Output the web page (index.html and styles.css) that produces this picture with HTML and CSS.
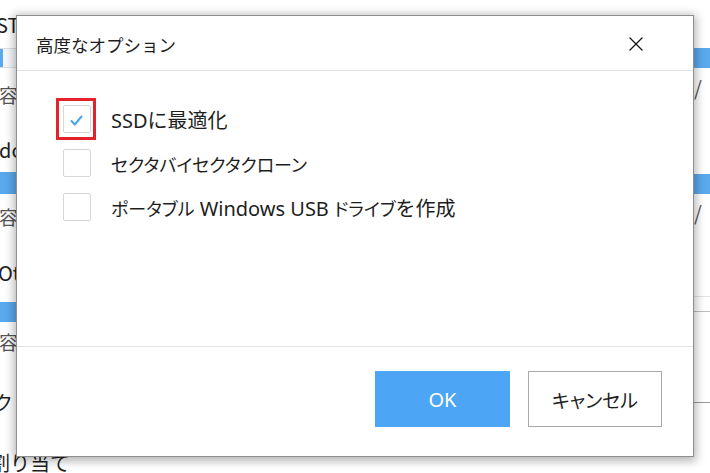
FILE: index.html
```html
<!DOCTYPE html>
<html lang="ja">
<head>
<meta charset="utf-8">
<link rel="stylesheet" href="styles.css">
</head>
<body>
<div class="page">
  <div class="main">
    <div class="side side-left">
      <div class="bg-name n1">ST1000DM</div>
      <div class="bg-bar bar-partial"></div>
      <div class="bg-cap c1">容量</div>
      <div class="bg-name n2">dows</div>
      <div class="bg-bar b2"></div>
      <div class="bg-cap c2">容量</div>
      <div class="bg-name n3">Other</div>
      <div class="bg-bar b3"></div>
      <div class="bg-cap c3">容量</div>
      <div class="bg-name n4">ク</div>
    </div>
    <div class="center"></div>
    <div class="side side-right">
      <div class="rbar r1"></div>
      <div class="slash s1">/</div>
      <div class="rbar r2"></div>
      <div class="slash s2">/</div>
      <div class="rline l1"></div>
      <div class="rline l2"></div>
      <div class="rline l3"></div>
    </div>
  </div>
  <div class="bottom-row">割り当て</div>

  <div class="dialog">
    <div class="dlg-head">
      <div class="dlg-title">高度なオプション</div>
      <button class="close" aria-label="close">
        <svg width="14" height="14" viewBox="0 0 14 14"><path d="M0.5 0.5 L13.5 13.5 M13.5 0.5 L0.5 13.5" stroke="#111" stroke-width="1.2" fill="none"/></svg>
      </button>
    </div>
    <div class="dlg-body">
      <div class="opt">
        <span class="box checked">
          <svg width="15" height="15" viewBox="0 0 15 15"><path d="M2.5 8 L5.8 11.5 L12.5 3.5" stroke="#4aa3f0" stroke-width="2" fill="none" stroke-linecap="round" stroke-linejoin="round"/></svg>
          <span class="mark"></span>
        </span>
        <span class="label"><span class="lat">SSD</span>に最適化</span>
      </div>
      <div class="opt">
        <span class="box"></span>
        <span class="label"><span class="kana">セクタバイセクタクローン</span></span>
      </div>
      <div class="opt">
        <span class="box"></span>
        <span class="label"><span class="kana">ポータブル</span><span class="lat"> Windows USB </span><span class="kana">ドライブ</span>を作成</span>
      </div>
    </div>
    <div class="dlg-foot">
      <button class="btn btn-ok">OK</button>
      <button class="btn btn-cancel">キャンセル</button>
    </div>
  </div>
</div>
</body>
</html>
```

FILE: styles.css
```css
* { box-sizing: border-box; }
html, body {
  margin: 0;
  padding: 0;
  width: 710px;
  height: 473px;
  overflow: hidden;
  background: #fff;
  font-family: "Noto Sans CJK JP", "Noto Sans", sans-serif;
  color: #1e1e1e;
}
.page {
  position: relative;
  width: 710px;
  height: 473px;
  display: flex;
  flex-direction: column;
  overflow: hidden;
}
.main {
  height: 453px;
  display: flex;
  flex-shrink: 0;
}
.side {
  width: 17px;
  overflow: hidden;
  display: flex;
  flex-direction: column;
  flex-shrink: 0;
}
.center { flex: 1; }

/* left background column */
.bg-name, .bg-cap {
  font-size: 20px;
  line-height: 20px;
  height: 20px;
  white-space: nowrap;
}
.bg-cap { color: #555; font-size: 19px; }
.n1 { margin-top: 15px; margin-left: -4px; }
.bg-bar { height: 20px; background: #5aa9ec; }
.bar-partial {
  margin-top: 13px;
  background: linear-gradient(to right, #5aa9ec 0 3px, #f4f8fc 3px);
  border-top: 1px solid #dcdcdc;
  border-bottom: 1px solid #dcdcdc;
}
.c1 { margin-top: 17px; margin-left: -1px; }
.n2 { margin-top: 35px; margin-left: -1px; }
.b2 { margin-top: 12px; height: 22px; }
.c2 { margin-top: 13px; margin-left: -1px; }
.n3 { margin-top: 36px; margin-left: -2px; }
.b3 { margin-top: 19px; }
.c3 { margin-top: 10px; margin-left: -1px; }
.n4 { margin-top: 41px; margin-left: -7px; }

.bottom-row {
  height: 20px;
  font-size: 20px;
  line-height: 20px;
  margin-left: -10px;
  white-space: nowrap;
}

/* right background column */
.rbar { height: 20px; background: #5aa9ec; }
.r1 { margin-top: 48px; }
.r2 { margin-top: 75px; }
.slash {
  font-size: 20px;
  line-height: 22px;
  height: 22px;
  color: #555;
  padding-left: 1px;
}
.s1 { margin-top: 9px; }
.s2 { margin-top: 8px; }
.rline { height: 1px; background: #c8c8c8; }
.l1 { margin-top: 72px; background: #e2e2e2; }
.l2 { margin-top: 14px; background: #bdbdbd; }
.l3 { margin-top: 90px; background: #9a9a9a; }

/* dialog */
.dialog {
  position: absolute;
  left: 16px;
  top: 15px;
  width: 678px;
  height: 442px;
  background: #fff;
  border: 1px solid #8e8e8e;
  box-shadow: 0 2px 9px 2px rgba(0, 0, 0, 0.3);
  display: flex;
  flex-direction: column;
}
.dlg-head {
  height: 55px;
  border-bottom: 1px solid #e3e3e3;
  display: flex;
  align-items: center;
  justify-content: space-between;
  padding: 0 50px 0 19px;
  flex-shrink: 0;
}
.dlg-title {
  font-size: 17.5px;
  color: #1e1e1e;
  padding-top: 2px;
}
.close {
  border: 0;
  background: transparent;
  padding: 0;
  width: 14px;
  height: 14px;
  display: flex;
  margin-top: 2px;
}
.dlg-body {
  flex: 1;
  padding: 26px 0 0 46px;
  display: flex;
  flex-direction: column;
}
.opt {
  height: 44px;
  display: flex;
  align-items: center;
  gap: 20px;
}
.box {
  position: relative;
  width: 28px;
  height: 28px;
  border: 1.5px solid #d6d6d6;
  border-radius: 2px;
  display: flex;
  align-items: center;
  justify-content: center;
  flex-shrink: 0;
}
.box svg { margin: 2px 2px 0 0; }
.box.checked .mark {
  position: absolute;
  left: -8px;
  top: -8px;
  right: -6px;
  bottom: -8px;
  border: 3px solid #e3222b;
}
.label {
  font-family: "Noto Sans CJK JP", "Noto Sans", sans-serif;
  font-size: 20px;
  color: #1e1e1e;
  white-space: pre;
}
.label .lat {
  font-family: "Noto Sans", "Noto Sans CJK JP", sans-serif;
}
.label .kana {
  font-size: 18px;
  font-feature-settings: "palt";
}
.dlg-foot {
  height: 110px;
  flex-shrink: 0;
  border-top: 1px solid #e3e3e3;
  display: flex;
  justify-content: flex-end;
  align-items: flex-start;
  gap: 18px;
  padding: 24px 31px 0 0;
}
.btn {
  height: 56px;
  font-family: "Noto Sans", "Noto Sans CJK JP", sans-serif;
  font-size: 18px;
  border-radius: 0;
  cursor: pointer;
}
.btn-ok {
  width: 135px;
  background: #4ca6f5;
  color: #fff;
  border: 1px solid #4ca6f5;
  font-size: 20px;
}
.btn-cancel {
  width: 134px;
  background: #fff;
  color: #1e1e1e;
  border: 1px solid #a9a9a9;
  font-size: 19px;
  font-family: "Noto Sans CJK JP", sans-serif;
  font-feature-settings: "palt";
}
```
